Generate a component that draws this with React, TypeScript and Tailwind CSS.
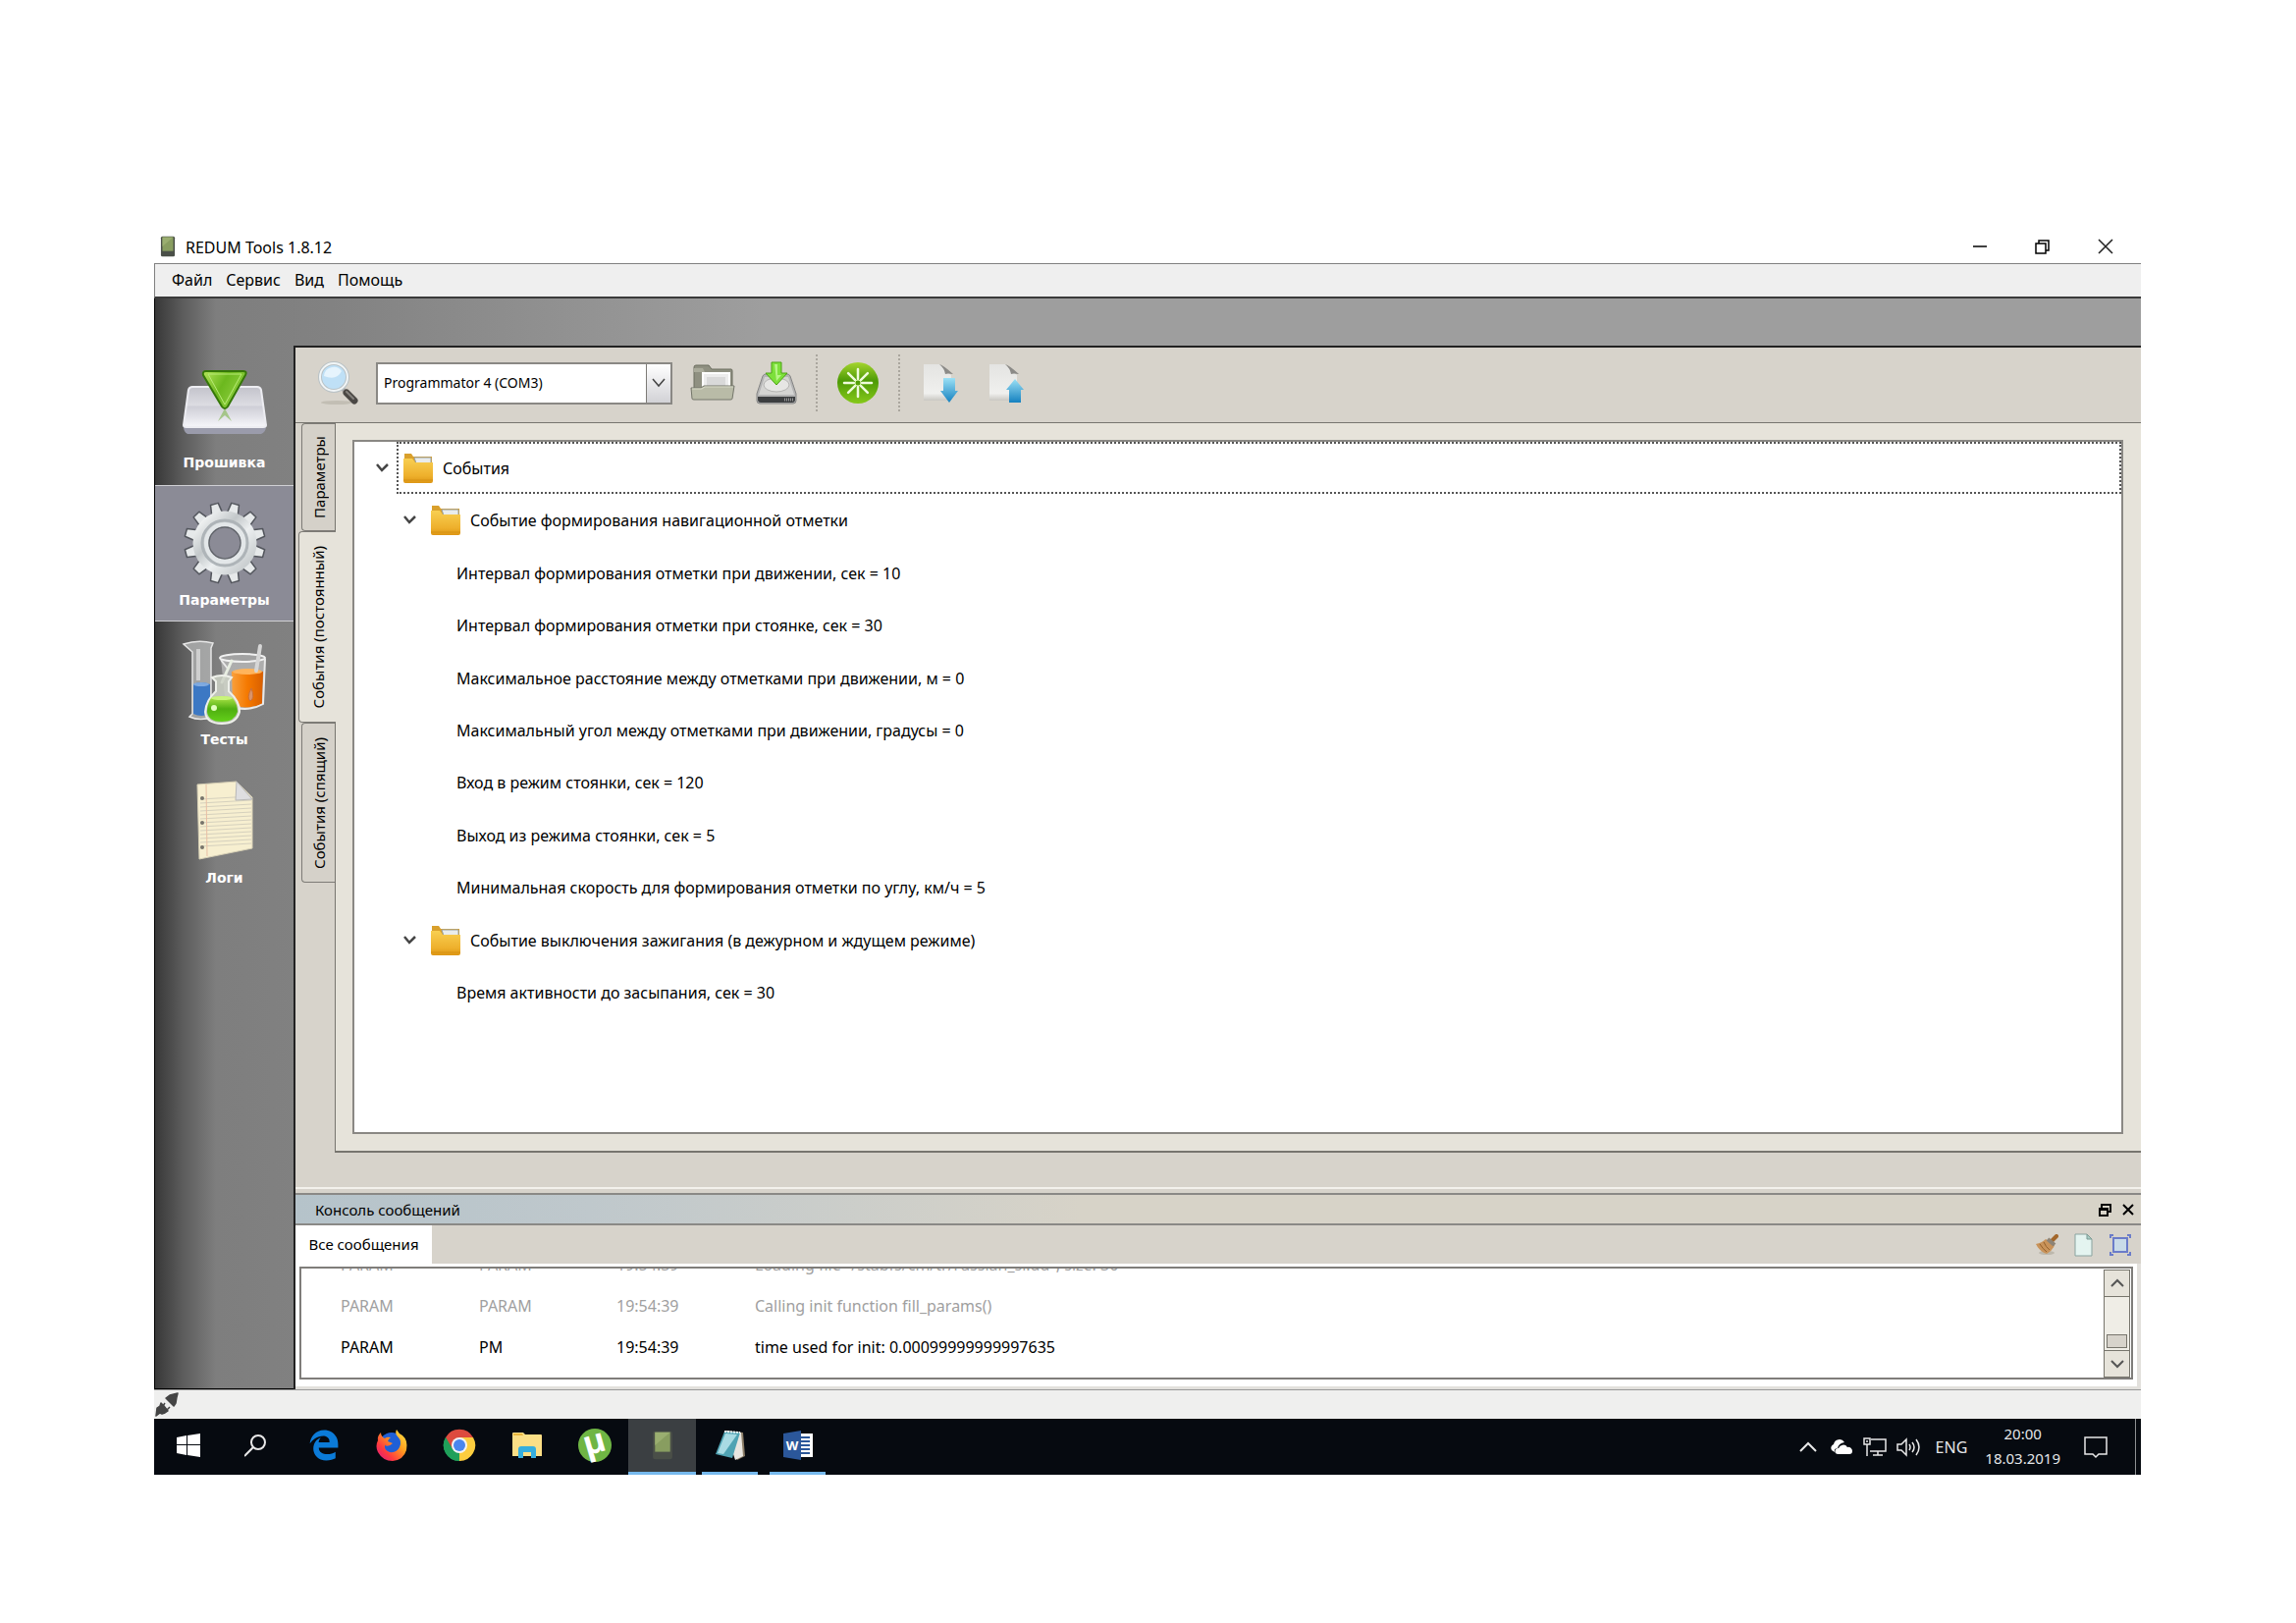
import type { ReactNode } from "react";
import { FaEdgeLegacy } from "react-icons/fa";

const parameterRows = [
  "Интервал формирования отметки при движении, сек = 10",
  "Интервал формирования отметки при стоянке, сек = 30",
  "Максимальное расстояние между отметками при движении, м = 0",
  "Максимальный угол между отметками при движении, градусы = 0",
  "Вход в режим стоянки, сек = 120",
  "Выход из режима стоянки, сек = 5",
  "Минимальная скорость для формирования отметки по углу, км/ч = 5",
];

const messages = [
  { source: "PARAM", module: "PARAM", time: "19:54:39", text: 'Loading file "/stabfs/cm/tr/russian_sl.dd", size: 36', dim: true },
  { source: "PARAM", module: "PARAM", time: "19:54:39", text: "Calling init function fill_params()", dim: true },
  { source: "PARAM", module: "PM", time: "19:54:39", text: "time used for init: 0.00099999999997635", dim: false },
];

/* ---------- Sidebar icons ---------- */

function FirmwareIcon() {
  return (
    <svg viewBox="0 0 90 84" className="w-[90px] h-[84px]">
      <defs>
        <linearGradient id="drive" x1="0" y1="0" x2="0" y2="1">
          <stop offset="0" stopColor="#c3c3cb" />
          <stop offset="0.45" stopColor="#dcdce2" />
          <stop offset="0.5" stopColor="#cfcfd7" />
          <stop offset="1" stopColor="#f6f6fa" />
        </linearGradient>
        <linearGradient id="arrow" x1="0" y1="0" x2="1" y2="0.5">
          <stop offset="0" stopColor="#b4e45a" />
          <stop offset="0.5" stopColor="#6cb81e" />
          <stop offset="1" stopColor="#8fd040" />
        </linearGradient>
      </defs>
      <path d="M8 26 Q9 23 12 23 H78 Q81 23 82 26 L87 63 Q87 69 82 71 H7 Q3 69 3 63Z" fill="#9a9bab" />
      <path d="M8 26 Q9 23 12 23 H78 Q81 23 82 26 L87 62 Q87 64 84 64 H6 Q3 64 3 62Z" fill="url(#drive)" stroke="#ededf2" strokeWidth="2" />
      <path d="M38 58 L45 45 L52 58 L45 52Z" fill="#8dbb64" opacity="0.7" />
      <path d="M26 7 H64 Q68 7 66 11 L48 43 Q45 47 42 43 L23 11 Q22 7 26 7Z" fill="url(#arrow)" stroke="#357708" strokeWidth="2" />
      <path d="M28 10 H62 L45 41Z" fill="none" stroke="#b9ea77" strokeWidth="1" />
    </svg>
  );
}

function GearIcon() {
  const teeth = Array.from({ length: 12 }, (_, i) => 15 + i * 30);
  return (
    <svg viewBox="0 0 84 84" className="w-[84px] h-[84px]">
      <defs>
        <linearGradient id="steel" x1="0" y1="0" x2="1" y2="1">
          <stop offset="0" stopColor="#f2f4f4" />
          <stop offset="0.35" stopColor="#c3c8ca" />
          <stop offset="0.6" stopColor="#eceff0" />
          <stop offset="1" stopColor="#c6cbcd" />
        </linearGradient>
      </defs>
      <g fill="#e6e9ea" stroke="#53565d" strokeWidth="1.5" strokeLinejoin="round">
        {teeth.map((angle) => (
          <path key={angle} d="M36 14 L38 1 H46 L48 14Z" transform={`rotate(${angle} 42 42)`} />
        ))}
      </g>
      <circle cx="42" cy="42" r="24" fill="none" stroke="url(#steel)" strokeWidth="17" />
      <circle cx="42" cy="42" r="23" fill="none" stroke="#aeb4b8" strokeWidth="3" />
      <circle cx="42" cy="42" r="19" fill="none" stroke="#e3e7e9" strokeWidth="4" />
      <circle cx="42" cy="42" r="16" fill="none" stroke="#5e6168" strokeWidth="1.5" />
    </svg>
  );
}

function FlasksIcon() {
  return (
    <svg viewBox="0 0 90 88" className="w-[90px] h-[88px]">
      <defs>
        <linearGradient id="orange" x1="0" y1="0" x2="1" y2="0">
          <stop offset="0" stopColor="#f9a03c" />
          <stop offset="0.5" stopColor="#f57900" />
          <stop offset="1" stopColor="#d95f00" />
        </linearGradient>
        <linearGradient id="green" x1="0" y1="0" x2="0" y2="1">
          <stop offset="0" stopColor="#b6ea4e" />
          <stop offset="0.5" stopColor="#4fae10" />
          <stop offset="1" stopColor="#63cf1a" />
        </linearGradient>
      </defs>
      <path d="M3 5 Q18 0 33 4 L31 9 V76 L33 79 Q20 84 9 79 L12 76 V13Z" fill="#b0b2b2" fillOpacity="0.8" stroke="#e6e6e6" strokeWidth="1.5" />
      <path d="M13 46 Q21 42 30 46 V76 Q21 80 13 76Z" fill="#3c78c4" />
      <ellipse cx="21" cy="46" rx="8" ry="2" fill="#7faae0" />
      <path d="M18 10 V42" stroke="#ececec" strokeWidth="4" opacity="0.6" />
      <path d="M41 20 H86 L84 66 Q65 74 46 68Z" fill="#bcbcbc" fillOpacity="0.75" />
      <path d="M52 33 Q65 29 84 33 L83 66 Q66 73 53 66Z" fill="url(#orange)" />
      <ellipse cx="68" cy="33" rx="15" ry="3" fill="#ffb45c" />
      <ellipse cx="63" cy="19" rx="23" ry="4" fill="#a2a2a2" stroke="#f1f1f1" strokeWidth="2" />
      <path d="M41 21 L48 30 M86 20 L84 66 Q72 73 56 70" fill="none" stroke="#eaeaea" strokeWidth="2" />
      <path d="M81 7 L77 32" stroke="#d6d6d6" strokeWidth="4" strokeLinecap="round" />
      <path d="M72 50 Q67 60 71 63 Q76 60 72 50" fill="#d9936a" stroke="#c9703a" strokeWidth="1" />
      <path d="M52 22 L42 44" stroke="#e8eee2" strokeWidth="3" strokeLinecap="round" />
      <path d="M32 39 Q42 35 52 39 L49 43 V53 Q61 64 60 74 Q57 86 42 86 Q26 86 25 74 Q26 62 36 53 V43Z" fill="#ccd1c6" fillOpacity="0.85" stroke="#eef0ea" strokeWidth="2" />
      <path d="M31 60 Q42 56 53 60 Q58 66 58 74 Q55 84 42 84 Q28 84 27 74 Q27 66 31 60Z" fill="url(#green)" />
      <ellipse cx="42" cy="60" rx="11" ry="2" fill="#c9f47a" />
      <circle cx="34" cy="70" r="3" fill="#e2ffbd" />
    </svg>
  );
}

function NotepadIcon() {
  const lines = Array.from({ length: 13 }, (_, i) => 17 + i * 4);
  return (
    <svg viewBox="0 0 60 84" className="w-[60px] h-[84px]">
      <path d="M2 5 L42 2 L58 18 V70 L4 81Z" fill="#f7efd0" stroke="#d6cfb5" strokeWidth="1" />
      {lines.map((y) => (
        <path key={y} d={`M5 ${y + 3} L57 ${y}`} stroke="#d5d0bd" strokeWidth="1" />
      ))}
      <path d="M11 5 L12 78" stroke="#e9bfa4" strokeWidth="1" />
      <path d="M42 2 L58 20 L41 21Z" fill="#dedee0" stroke="#b8b8b8" strokeWidth="1" />
      <g fill="#77746b">
        <circle cx="7" cy="19" r="2" />
        <circle cx="7" cy="44" r="2" />
        <circle cx="7" cy="69" r="2" />
      </g>
    </svg>
  );
}

/* ---------- Toolbar icons ---------- */

function MagnifierIcon() {
  return (
    <svg viewBox="0 0 44 44" className="w-11 h-11 shrink-0" aria-hidden="true">
      <ellipse cx="20" cy="42" rx="16" ry="2" fill="#c2beb4" />
      <path d="M26 28 L31 33" stroke="#a8a8a8" strokeWidth="4" />
      <path d="M30 32 L38 40" stroke="#4b4845" strokeWidth="7" strokeLinecap="round" />
      <path d="M30 31 L37 38" stroke="#85817d" strokeWidth="2" strokeLinecap="round" />
      <circle cx="17" cy="16" r="14" fill="#bfe0f6" stroke="#b9c2c6" strokeWidth="4" />
      <circle cx="17" cy="16" r="14" fill="none" stroke="#f1f5f6" strokeWidth="2" />
      <path d="M7 15 A10 10 0 0 1 25 10 Q20 20 7 15Z" fill="#e6f4fd" />
    </svg>
  );
}

function OpenFolderIcon() {
  return (
    <svg viewBox="0 0 46 38" className="w-[46px] h-[38px]">
      <path d="M4 3 Q4 1 6 1 H19 L22 5 H42 Q43 5 43 7 V28 H4Z" fill="#8f9081" stroke="#6d6e60" strokeWidth="1" />
      <path d="M4 4 H13 L15 8 H4Z" fill="#aaab9b" />
      <rect x="13" y="9" width="27" height="18" fill="#ececec" stroke="#ffffff" strokeWidth="2" />
      <rect x="17" y="13" width="19" height="10" fill="#d9d9d9" />
      <path d="M1 24 H11 L14 22 H45 L43 35 Q43 36 41 36 H4 Q2 36 2 35Z" fill="#b9bba7" stroke="#74766a" strokeWidth="1" />
      <path d="M2 25 H12 L15 23 H44" fill="none" stroke="#d8dac8" strokeWidth="1" />
    </svg>
  );
}

function SaveDriveIcon() {
  return (
    <svg viewBox="0 0 42 44" className="w-[42px] h-11">
      <path d="M7 15 Q8 13 10 13 H32 Q34 13 35 15 L41 33 V40 Q41 43 38 43 H4 Q1 43 1 40 V33Z" fill="#b5b5b5" stroke="#858585" strokeWidth="1" />
      <path d="M9 16 H33 L39 34 H3Z" fill="#d4d4d2" />
      <ellipse cx="21" cy="24" rx="13" ry="7" fill="#e6e6e4" stroke="#b4b4b2" strokeWidth="1" />
      <path d="M2 36 H40 V39 Q40 42 37 42 H5 Q2 42 2 39Z" fill="#3c3e40" />
      <path d="M29 39 H38" stroke="#979797" strokeWidth="3" strokeDasharray="1 1" />
      <path d="M16 1 H26 V12 H32 L21 24 L10 12 H16Z" fill="#7de03b" stroke="#4da315" strokeWidth="1" />
      <path d="M19 3 H22 V14 H26 L21 20" fill="#b6f586" />
    </svg>
  );
}

function RefreshStarIcon() {
  return (
    <svg viewBox="0 0 44 44" className="w-11 h-11">
      <defs>
        <linearGradient id="ball" x1="0" y1="0" x2="0" y2="1">
          <stop offset="0" stopColor="#a5d52e" />
          <stop offset="0.45" stopColor="#4d9a06" />
          <stop offset="1" stopColor="#86c91a" />
        </linearGradient>
      </defs>
      <circle cx="22" cy="22" r="21" fill="url(#ball)" />
      <g stroke="#effbdc" strokeWidth="2.5" strokeLinecap="round">
        {[0, 45, 90, 135, 180, 225, 270, 315].map((angle) => (
          <path key={angle} d="M22 18 V8" transform={`rotate(${angle} 22 22)`} />
        ))}
      </g>
      <circle cx="22" cy="22" r="3" fill="none" stroke="#d3efa6" strokeWidth="1" />
    </svg>
  );
}

function PageArrowIcon({ up }: { up?: boolean }) {
  return (
    <svg viewBox="0 0 38 42" className="w-[38px] h-[42px]">
      <defs>
        <linearGradient id="blue" x1="0" y1="0" x2="0" y2="1">
          <stop offset="0" stopColor="#9be0f5" />
          <stop offset="1" stopColor="#1581c0" />
        </linearGradient>
        <linearGradient id="sheet" x1="0" y1="0" x2="0" y2="1">
          <stop offset="0" stopColor="#e4e4e2" />
          <stop offset="0.8" stopColor="#f0f0ee" />
          <stop offset="1" stopColor="#c9c7c2" />
        </linearGradient>
      </defs>
      <path d="M2 2 H18 Q22 6 30 13 V39 H2Z" fill="url(#sheet)" />
      <path d="M18 2 Q22 3 32 12 Q26 11 24 12 Q23 6 18 2Z" fill="#8b8a87" />
      {up ? (
        <path d="M28 17 L37 28 H34 V41 H22 V28 H19Z" fill="url(#blue)" />
      ) : (
        <path d="M22 16 H34 V29 H37 L28 41 L19 29 H22Z" fill="url(#blue)" />
      )}
    </svg>
  );
}

/* ---------- Tree parts ---------- */

function FolderIcon() {
  return (
    <svg viewBox="0 0 32 32" className="w-8 h-8 shrink-0" aria-hidden="true">
      <defs>
        <linearGradient id="folder" x1="0" y1="0" x2="0" y2="1">
          <stop offset="0" stopColor="#f8cf52" />
          <stop offset="0.7" stopColor="#eeb02c" />
          <stop offset="1" stopColor="#dd9614" />
        </linearGradient>
      </defs>
      <path d="M2 1 H9 L11 4 H30 V14 H2Z" fill="#d9a02c" />
      <path d="M12 5 H29 V11 H14Z" fill="#e9ecec" stroke="#9aa2a2" strokeWidth="1" />
      <path d="M1 6 H10 L13 10 H31 V29 Q31 31 29 31 H3 Q1 31 1 29Z" fill="url(#folder)" />
      <path d="M1 28 H31" stroke="#cb850c" strokeWidth="1" opacity="0.5" />
    </svg>
  );
}

function TreeChevron() {
  return (
    <button type="button" aria-label="Свернуть" className="w-[13px] h-5 shrink-0">
      <svg viewBox="0 0 13 10" className="w-[13px] h-[10px]">
        <path d="M1 1 L6 7 L12 1" fill="none" stroke="#454545" strokeWidth="2.5" />
      </svg>
    </button>
  );
}

function LeafRow({ text }: { text: string }) {
  return <li role="treeitem" className="flex items-center pl-[104px]">{text}</li>;
}

/* ---------- Taskbar icons ---------- */

function DeviceIcon({ className }: { className: string }) {
  return (
    <svg viewBox="0 0 20 28" className={className} aria-hidden="true">
      <rect x="1" y="1" width="18" height="26" rx="2" fill="#4a4f48" />
      <rect x="3" y="2" width="14" height="18" fill="#889d60" />
      <path d="M3 2 H17 L3 14Z" fill="#9aae70" />
    </svg>
  );
}

function FirefoxIcon() {
  return (
    <svg viewBox="0 0 34 34" className="w-[34px] h-[34px]">
      <defs>
        <linearGradient id="fox" x1="1" y1="0" x2="0" y2="1">
          <stop offset="0" stopColor="#fff04a" />
          <stop offset="0.4" stopColor="#ff9a1e" />
          <stop offset="0.7" stopColor="#ff3b3f" />
          <stop offset="1" stopColor="#d9128c" />
        </linearGradient>
      </defs>
      <circle cx="17" cy="17" r="13" fill="#1f5fd6" />
      <path d="M22 1 Q20 5 23 8 Q28 13 25 19 Q22 25 15 24 Q9 22 10 17 Q14 19 18 15 L13 13 Q14 10 16 9 Q12 8 10 10 Q6 8 6 4 Q2 8 3 12 Q0 18 3 24 Q8 33 18 33 Q29 32 32 22 Q34 12 28 7 Q24 5 22 1Z" fill="url(#fox)" />
    </svg>
  );
}

function ChromeIcon() {
  return (
    <svg viewBox="0 0 34 34" className="w-[34px] h-[34px]">
      <path d="M17 17 L3 9 A16 16 0 0 1 31 9Z" fill="#dd4b3e" />
      <path d="M17 17 L31 9 A16 16 0 0 1 17 33Z" fill="#fccd3f" />
      <path d="M17 17 L17 33 A16 16 0 0 1 3 9Z" fill="#1fa05a" />
      <path d="M17 9 H31 L24 21Z" fill="#fccd3f" />
      <path d="M3 9 L10 21 L17 9Z" fill="#dd4b3e" />
      <path d="M3 9 L10 21 L16 25 L17 33 A16 16 0 0 1 3 9Z" fill="#1fa05a" />
      <circle cx="17" cy="17" r="8" fill="#f3f3f3" />
      <circle cx="17" cy="17" r="6" fill="#4a86ee" />
    </svg>
  );
}

function ExplorerIcon() {
  return (
    <svg viewBox="0 0 32 28" className="w-8 h-7">
      <path d="M1 2 Q1 1 2 1 H12 L14 3 H30 Q31 3 31 4 V25 H1Z" fill="#fbdf86" />
      <path d="M2 2 H11 L12 4 H2Z" fill="#e9b63d" />
      <path d="M7 27 V18 Q7 15 10 15 H22 Q25 15 25 18 V27 H20 V21 H12 V27Z" fill="#35aede" />
    </svg>
  );
}

function TorrentIcon() {
  return (
    <svg viewBox="0 0 36 36" className="w-9 h-9">
      <circle cx="18" cy="18" r="17" fill="#6fb544" />
      <text x="18" y="26" textAnchor="middle" fontFamily="Open Sans" fontSize="34" fontWeight="700" fill="#ffffff" transform="rotate(-16 18 18)">µ</text>
    </svg>
  );
}

function NotebookIcon() {
  return (
    <svg viewBox="0 0 34 34" className="w-[34px] h-[34px]">
      <path d="M12 2 L30 4 L32 28 L24 32Z" fill="#8a7c66" />
      <path d="M12 2 L28 4 L30 28 L22 32Z" fill="#e8e6e0" />
      <path d="M11 3 L27 4 L19 30 L2 26Z" fill="#4fa3b3" />
      <path d="M12 5 L24 6 L10 26 L4 25Z" fill="#a9dbe3" />
      <path d="M11 3 L27 4" stroke="#eef6f7" strokeWidth="2" strokeDasharray="2 1" />
    </svg>
  );
}

function WordIcon() {
  return (
    <svg viewBox="0 0 32 32" className="w-8 h-8">
      <rect x="16" y="4" width="15" height="24" fill="#ffffff" />
      <path d="M19 8 H28 M19 12 H28 M19 16 H28 M19 20 H28 M19 24 H28" stroke="#2b579a" strokeWidth="2" />
      <path d="M1 4 L19 1 V31 L1 28Z" fill="#2b579a" />
      <text x="10" y="21" textAnchor="middle" fontFamily="Open Sans" fontSize="13" fontWeight="700" fill="#ffffff">W</text>
    </svg>
  );
}

function SideItem({ label, active, children }: { label: string; active?: boolean; children: ReactNode }) {
  return (
    <button
      type="button"
      className={
        active
          ? "mb-[2px] flex h-[139px] w-full flex-col items-center border-y border-[#d0d0d4] bg-[#8b8b96] pt-4"
          : "flex h-[141px] w-full flex-col items-center pt-[18px]"
      }
    >
      <span className="flex h-[84px] items-center justify-center">{children}</span>
      <span className="font-['DejaVu_Sans'] text-[14px] leading-8 font-bold text-white">{label}</span>
    </button>
  );
}

function SideTab({ label, active, className }: { label: string; active?: boolean; className: string }) {
  return (
    <button
      type="button"
      role="tab"
      aria-selected={!!active}
      className={
        (active
          ? "relative -mr-px w-[38px] bg-[#e6e3da] "
          : "w-[34px] bg-[#d5d1c9] ") +
        "flex items-center justify-center rounded-l border border-r-0 border-[#7d7b76] " +
        className
      }
    >
      <span className="rotate-180 text-[15px] leading-5 whitespace-nowrap [writing-mode:vertical-rl]">{label}</span>
    </button>
  );
}

function TaskButton({ label, state, children }: { label: string; state?: "active" | "open"; children: ReactNode }) {
  return (
    <button
      type="button"
      aria-label={label}
      className={
        state === "active"
          ? "flex w-[69px] flex-col items-center bg-[#3b3f42]"
          : "flex w-[69px] flex-col items-center"
      }
    >
      <span className="flex flex-1 items-center">{children}</span>
      {state === "active" && <span className="h-[3px] w-full bg-[#76b9ed]" />}
      {state === "open" && <span className="h-[3px] w-[57px] bg-[#76b9ed]" />}
      {!state && <span className="h-[3px]" />}
    </button>
  );
}

export default function App() {
  return (
    <div className="min-h-screen bg-white pt-[230px] pr-[158px] pl-[157px] font-['Noto_Sans',sans-serif] text-[16px] leading-5 text-black">

      {/* Title bar */}
      <header className="flex h-[38px] items-center">
        <DeviceIcon className="ml-[5px] mt-1 h-[22px] w-[18px]" />
        <h1 className="ml-[9px] flex-1 pt-[6px]">REDUM Tools 1.8.12</h1>
        <div className="mr-1 flex pt-1">
          <button type="button" aria-label="Свернуть" className="flex h-8 w-16 items-center justify-center">
            <svg viewBox="0 0 18 18" className="h-[18px] w-[18px]"><path d="M2 9 H16" stroke="#000" strokeWidth="1.5" /></svg>
          </button>
          <button type="button" aria-label="Восстановить" className="flex h-8 w-16 items-center justify-center">
            <svg viewBox="0 0 18 18" className="h-[18px] w-[18px]" fill="none" stroke="#000" strokeWidth="1.5">
              <path d="M2 6 H12 V16 H2Z M5 6 V3 H15 V13 H12" />
            </svg>
          </button>
          <button type="button" aria-label="Закрыть" className="flex h-8 w-16 items-center justify-center">
            <svg viewBox="0 0 18 18" className="h-[18px] w-[18px]"><path d="M2 2 L16 16 M16 2 L2 16" stroke="#222" strokeWidth="1.5" /></svg>
          </button>
        </div>
      </header>

      {/* Menu bar */}
      <nav className="flex h-9 items-center gap-[14px] border-t border-b-2 border-l border-t-[#808080] border-b-[#3a3a3a] border-l-[#808080] bg-[#efefef] pb-[2px] pl-[17px]">
        <button type="button">Файл</button>
        <button type="button">Сервис</button>
        <button type="button">Вид</button>
        <button type="button">Помощь</button>
      </nav>

      <main className="flex border-l border-black bg-[linear-gradient(90deg,#383838_0px,#5c5c5c_28px,#7e7e7e_62px,#828282_180px,#9e9e9e_620px)]">

        {/* Sidebar */}
        <aside className="w-[141px] shrink-0 border-b border-black pt-[49px]">
          <SideItem label="Прошивка"><FirmwareIcon /></SideItem>
          <SideItem label="Параметры" active><GearIcon /></SideItem>
          <SideItem label="Тесты"><FlasksIcon /></SideItem>
          <SideItem label="Логи"><NotepadIcon /></SideItem>
        </aside>

        <div className="mt-[48px] flex min-w-0 flex-1 flex-col border-t-2 border-l-2 border-[#222] bg-[#d7d3cb]">

          {/* Toolbar */}
          <div className="flex h-[77px] items-center gap-4 border-b border-[#77756f] pb-1 pl-[22px]">
            <MagnifierIcon />
            <div className="relative h-[43px] w-[302px] shrink-0">
              <select aria-label="Порт" className="h-full w-full appearance-none border-2 border-[#8a8884] bg-white pl-[6px] text-[14px]">
                <option>Programmator 4 (COM3)</option>
              </select>
              <span className="pointer-events-none absolute inset-y-[2px] right-[2px] flex w-[25px] items-center justify-center border-l border-[#7d7b77] bg-linear-to-b from-white to-[#d2d2d6]">
                <svg viewBox="0 0 16 10" className="h-[10px] w-4"><path d="M2 1 L8 8 L14 1" fill="none" stroke="#444" strokeWidth="1.5" /></svg>
              </span>
            </div>
            <button type="button" aria-label="Открыть" className="flex w-[50px] justify-center"><OpenFolderIcon /></button>
            <button type="button" aria-label="Сохранить" className="flex w-12 justify-center"><SaveDriveIcon /></button>
            <span className="h-[58px] border-l-2 border-dotted border-[#aaa69e]" />
            <button type="button" aria-label="Обновить" className="flex w-[50px] justify-center"><RefreshStarIcon /></button>
            <span className="h-[58px] border-l-2 border-dotted border-[#aaa69e]" />
            <button type="button" aria-label="Считать" className="flex w-[50px] justify-center"><PageArrowIcon /></button>
            <button type="button" aria-label="Записать" className="flex w-[52px] justify-center"><PageArrowIcon up /></button>
          </div>

          <div className="flex">
            {/* Vertical tabs */}
            <div role="tablist" aria-orientation="vertical" className="flex w-10 shrink-0 flex-col items-end">
              <SideTab label="Параметры" className="h-[110px]" />
              <SideTab label="События (постоянный)" active className="h-[195px]" />
              <SideTab label="События (спящий)" className="h-[163px]" />
            </div>

            {/* Parameter tree */}
            <div className="min-w-0 flex-1 border-b-2 border-l border-[#77756f] bg-[#e6e3da] py-[17px] pr-[18px] pl-[17px]">
              <div className="h-[707px] border-2 border-[#8a8884] bg-white">
                <ul role="tree" className="grid h-[588px] grid-rows-11">
                  <li role="treeitem" aria-expanded="true" className="flex items-center pl-[22px]">
                    <TreeChevron />
                    <div className="ml-2 flex h-full flex-1 items-center gap-[9px] border-2 border-dotted border-[#555] pl-1">
                      <FolderIcon />
                      События
                    </div>
                  </li>
                  <li role="treeitem" aria-expanded="true" className="flex items-center pl-[50px]">
                    <TreeChevron />
                    <div className="ml-2 flex items-center gap-[9px] pl-[6px]">
                      <FolderIcon />
                      Событие формирования навигационной отметки
                    </div>
                  </li>
                  {parameterRows.map((row) => (
                    <LeafRow key={row} text={row} />
                  ))}
                  <li role="treeitem" aria-expanded="true" className="flex items-center pl-[50px]">
                    <TreeChevron />
                    <div className="ml-2 flex items-center gap-[9px] pl-[6px]">
                      <FolderIcon />
                      Событие выключения зажигания (в дежурном и ждущем режиме)
                    </div>
                  </li>
                  <LeafRow text="Время активности до засыпания, сек = 30" />
                </ul>
              </div>
            </div>
          </div>

          {/* Message console */}
          <section className="mt-[35px] border-t-2 border-[#f3f1ec]">
            <div className="mt-1 flex h-[33px] items-center border-y-2 border-[#8a8986] bg-[linear-gradient(90deg,#b5c3ca_0px,#bfc8cc_300px,#d7d3c8_800px)] pl-5">
              <h2 className="flex-1 text-[15px]">Консоль сообщений</h2>
              <button type="button" aria-label="Открепить" className="mr-[10px]">
                <svg viewBox="0 0 14 14" className="h-[14px] w-[14px]" fill="none" stroke="#000" strokeWidth="2">
                  <path d="M2 6 H10 V13 H2Z M4 5 V2 H13 V9 H10 M4 2 H13 M2 7 H10" />
                </svg>
              </button>
              <button type="button" aria-label="Закрыть консоль" className="mr-[6px]">
                <svg viewBox="0 0 14 14" className="h-[14px] w-[14px]"><path d="M2 2 L12 12 M12 2 L2 12" stroke="#000" strokeWidth="2" /></svg>
              </button>
            </div>
            <div className="flex h-[39px] items-center">
              <button type="button" className="h-full w-[139px] bg-white pb-[2px] text-[15px]">Все сообщения</button>
              <div className="ml-auto flex items-center gap-4 pr-[10px]">
                <button type="button" aria-label="Очистить">
                  <svg viewBox="0 0 24 22" className="h-[22px] w-6">
                    <ellipse cx="12" cy="19" rx="8" ry="2" fill="#bdb8ac" />
                    <path d="M16 8 L22 2" stroke="#a3672b" strokeWidth="4" strokeLinecap="round" />
                    <path d="M11 5 L20 11 Q18 17 12 20 Q5 18 1 10 Q7 9 11 5Z" fill="#c9935a" />
                    <path d="M13 5 L20 11" stroke="#8d8376" strokeWidth="4" />
                    <path d="M5 10 Q8 15 12 18 M9 8 Q11 13 15 16" fill="none" stroke="#94602a" strokeWidth="1" />
                  </svg>
                </button>
                <button type="button" aria-label="Новый файл">
                  <svg viewBox="0 0 20 24" className="h-6 w-5">
                    <path d="M1 1 H13 L18 6 V23 H1Z" fill="#e4f4f0" stroke="#8aa39f" strokeWidth="1" />
                    <path d="M13 1 V6 H18Z" fill="#a9cfc6" stroke="#7d9a94" strokeWidth="1" />
                  </svg>
                </button>
                <button type="button" aria-label="Развернуть">
                  <svg viewBox="0 0 22 22" className="h-[22px] w-[22px]" fill="none" stroke="#6b7cc9" strokeWidth="2">
                    <rect x="4" y="4" width="14" height="14" fill="#c9dbe8" />
                    <path d="M1 4 V1 H4 M18 1 H21 V4 M21 18 V21 H18 M4 21 H1 V18" />
                  </svg>
                </button>
              </div>
            </div>
            <div className="border-r-4 border-b-[3px] border-[#e2e0dc] bg-white px-1 pt-[3px] pb-[7px]">
              <div className="flex h-[115px] border-2 border-[#7f7d7a]">
                <div className="flex min-w-0 flex-1 items-end overflow-hidden pb-[10px]">
                  <table className="w-full table-fixed text-left">
                    <tbody>
                      {messages.map((message) => (
                        <tr key={message.text} className={message.dim ? "h-[42px] text-[#a0a0a0]" : "h-[42px]"}>
                          <td className="w-[181px] pl-10">{message.source}</td>
                          <td className="w-[140px]">{message.module}</td>
                          <td className="w-[141px]">{message.time}</td>
                          <td>{message.text}</td>
                        </tr>
                      ))}
                    </tbody>
                  </table>
                </div>
                {/* Scroll bar */}
                <div className="mt-px mr-px flex h-[110px] w-[27px] flex-col border border-[#77756c] bg-[#efede6]">
                  <button type="button" aria-label="Вверх" className="flex h-[27px] items-center justify-center border-b border-[#77756c] bg-[#e6e3da]">
                    <svg viewBox="0 0 16 10" className="h-[10px] w-4"><path d="M2 8 L8 2 L14 8" fill="none" stroke="#555" strokeWidth="2" /></svg>
                  </button>
                  <div className="flex flex-1 flex-col justify-end p-[2px]">
                    <div className="h-[14px] border border-[#77756c] bg-[#d7d3cb]" />
                  </div>
                  <button type="button" aria-label="Вниз" className="flex h-[27px] items-center justify-center border-t border-[#77756c] bg-[#e6e3da]">
                    <svg viewBox="0 0 16 10" className="h-[10px] w-4"><path d="M2 2 L8 8 L14 2" fill="none" stroke="#555" strokeWidth="2" /></svg>
                  </button>
                </div>
              </div>
            </div>
          </section>
        </div>
      </main>

      {/* Status bar */}
      <footer className="flex h-[30px] items-center border-t border-[#999] bg-[#efefee]">
        <svg viewBox="0 0 26 26" className="h-[26px] w-[26px]" fill="#444444" stroke="#444444" aria-hidden="true">
          <path d="M2 24 L3 16 L6 14 L7 11 L10 14 L14 19 L11 21 L8 22 L6 21Z M12 6 L16 3 L20 2 L24 1 L23 5 L22 11 L20 14Z" strokeWidth="1.5" strokeLinejoin="round" />
          <path d="M9 14 L11 11 M13 18 L16 15" strokeWidth="1.5" />
        </svg>
      </footer>

      {/* Taskbar */}
      <div className="flex h-[57px] bg-[#060a10] text-[#e4e6e8]">
        <TaskButton label="Пуск">
          <svg viewBox="0 0 24 24" className="h-6 w-6" fill="#ffffff">
            <path d="M0 4 L10 2 V11 H0Z M11 2 L24 0 V11 H11Z M0 12 H10 V22 L0 20Z M11 12 H24 V24 L11 22Z" />
          </svg>
        </TaskButton>
        <TaskButton label="Поиск">
          <svg viewBox="0 0 24 24" className="h-6 w-6" fill="none" stroke="#e8e8e8" strokeWidth="2">
            <circle cx="14" cy="9" r="7" />
            <path d="M9 14 L0 23" />
          </svg>
        </TaskButton>
        <TaskButton label="Edge"><FaEdgeLegacy className="h-8 w-8 text-[#0b7bd8]" /></TaskButton>
        <TaskButton label="Firefox"><FirefoxIcon /></TaskButton>
        <TaskButton label="Chrome"><ChromeIcon /></TaskButton>
        <TaskButton label="Проводник"><ExplorerIcon /></TaskButton>
        <TaskButton label="Торрент"><TorrentIcon /></TaskButton>
        <TaskButton label="REDUM Tools" state="active"><DeviceIcon className="h-8 w-[22px]" /></TaskButton>
        <TaskButton label="Блокнот" state="open"><NotebookIcon /></TaskButton>
        <TaskButton label="Word" state="open"><WordIcon /></TaskButton>

        <div className="ml-auto flex items-center gap-[10px]">
          <svg viewBox="0 0 18 12" className="mr-[3px] h-3 w-[18px]" aria-hidden="true"><path d="M1 10 L9 2 L17 10" fill="none" stroke="#e8e8e8" strokeWidth="2" /></svg>
          <svg viewBox="0 0 24 16" className="h-4 w-6" fill="#ffffff" aria-hidden="true">
            <path d="M2 11 A4 4 0 0 1 4 5 A6 6 0 0 1 15 3 Q9 4 8 9 Q4 9 5 13Z" />
            <path d="M8 15 A3 3 0 0 1 9 9 A5 5 0 0 1 18 8 A4 4 0 0 1 23 12 Q23 15 20 15Z" />
          </svg>
          <svg viewBox="0 0 24 20" className="h-5 w-6" fill="none" stroke="#e8e8e8" strokeWidth="1.5" aria-hidden="true">
            <path d="M8 2 H23 V14 H7 M15 14 V18 M10 18 H20 M1 1 H7 V7 H1Z M4 7 V19 M3 4 H5" />
          </svg>
          <svg viewBox="0 0 26 20" className="h-5 w-[26px]" fill="none" stroke="#e8e8e8" strokeWidth="1.5" aria-hidden="true">
            <path d="M1 7 H5 L10 2 V18 L5 13 H1Z M13 7 Q15 10 13 13 M16 5 Q20 10 16 15 M20 2 Q26 10 20 18" />
          </svg>
          <span className="ml-1">ENG</span>
          <div className="ml-2 pb-[2px] text-center text-[15px] leading-[25px]">
            <div>20:00</div>
            <div>18.03.2019</div>
          </div>
          <button type="button" aria-label="Уведомления" className="mr-[18px] ml-[14px]">
            <svg viewBox="0 0 24 24" className="h-6 w-6" fill="none" stroke="#e8e8e8" strokeWidth="1.5">
              <path d="M1 2 H23 V19 H15 L12 22 L9 19 H1Z" />
            </svg>
          </button>
          <span className="h-[57px] w-[6px] border-l border-[#8d9092]" />
        </div>
      </div>
    </div>
  );
}
